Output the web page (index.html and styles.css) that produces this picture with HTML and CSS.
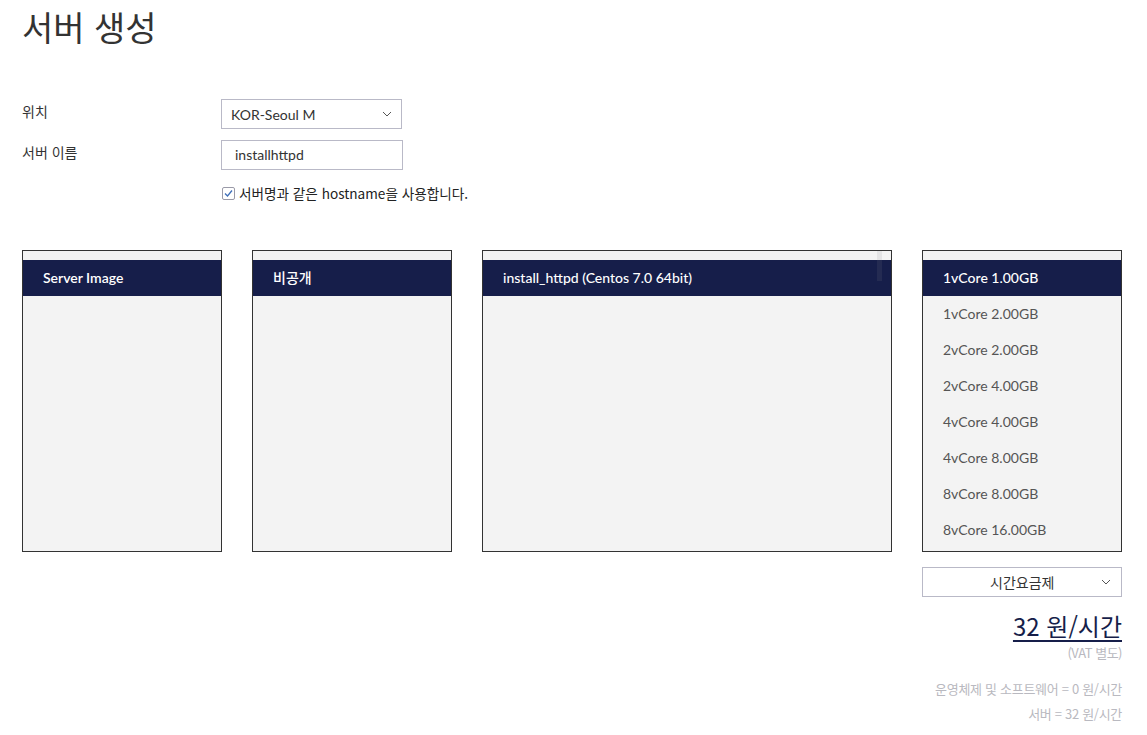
FILE: index.html
```html
<!DOCTYPE html>
<html lang="ko">
<head>
    <meta charset="UTF-8">
    <title>서버 생성</title>
    <link rel="stylesheet" href="styles.css">
</head>
<body>
    <div class="container">
        <h1>서버 생성</h1>

        <div class="form">
            <div class="form-row">
                <label>위치</label>
                <div class="select">
                    <span>KOR-Seoul M</span>
                    <svg class="chevron" width="10" height="6" viewBox="0 0 10 6"><polyline points="1,1 5,5 9,1" fill="none" stroke="#555" stroke-width="1"/></svg>
                </div>
            </div>
            <div class="form-row">
                <label>서버 이름</label>
                <div class="input">installhttpd</div>
            </div>
            <div class="form-row">
                <label></label>
                <div class="check">
                    <span class="box">
                        <svg width="11" height="11" viewBox="0 0 11 11"><polyline points="2,5.5 4.5,8 9,2.5" fill="none" stroke="#3f6fb8" stroke-width="1.3"/></svg>
                    </span>
                    서버명과 같은 hostname을 사용합니다.
                </div>
            </div>
        </div>

        <div class="lists">
            <ul class="list">
                <li class="selected strong">Server Image</li>
            </ul>
            <ul class="list">
                <li class="selected">비공개</li>
            </ul>
            <ul class="list wide">
                <li class="selected">install_httpd (Centos 7.0 64bit)</li>
                <span class="thumb"></span>
            </ul>
            <ul class="list">
                <li class="selected">1vCore 1.00GB</li>
                <li>1vCore 2.00GB</li>
                <li>2vCore 2.00GB</li>
                <li>2vCore 4.00GB</li>
                <li>4vCore 4.00GB</li>
                <li>4vCore 8.00GB</li>
                <li>8vCore 8.00GB</li>
                <li>8vCore 16.00GB</li>
            </ul>
        </div>

        <div class="pricing">
            <div class="select plan">
                <span>시간요금제</span>
                <svg class="chevron" width="10" height="6" viewBox="0 0 10 6"><polyline points="1,1 5,5 9,1" fill="none" stroke="#555" stroke-width="1"/></svg>
            </div>
            <div class="total">32 원/시간</div>
            <div class="vat">(VAT 별도)</div>
            <div class="detail">운영체제 및 소프트웨어 = 0 원/시간</div>
            <div class="detail">서버 = 32 원/시간</div>
        </div>
    </div>
</body>
</html>
```

FILE: styles.css
```css
* { margin: 0; padding: 0; box-sizing: border-box; }
body {
    font-family: Lato, "Noto Sans CJK KR", sans-serif;
    background: #fff;
    color: #333;
}
.container {
    width: 1147px;
    padding: 0 25px 0 22px;
}
h1 {
    font-family: "Noto Sans CJK KR", sans-serif;
    font-size: 34px;
    font-weight: 400;
    line-height: 40px;
    margin-top: 7px;
    color: #333;
}
.form {
    margin-top: 52px;
}
.form-row {
    display: flex;
    align-items: center;
    margin-bottom: 11px;
}
.form-row label {
    width: 199px;
    flex-shrink: 0;
    font-family: "Noto Sans CJK KR", sans-serif;
    font-size: 14px;
    color: #333;
    align-self: flex-start;
    padding-top: 2px;
}
.select {
    width: 181px;
    height: 30px;
    border: 1px solid #b9b9c7;
    display: flex;
    align-items: center;
    justify-content: space-between;
    padding: 0 9px 0 9px;
    font-size: 14px;
    color: #333;
    background: #fff;
}
.chevron {
    display: block;
}
.input {
    width: 182px;
    height: 30px;
    border: 1px solid #b9b9c7;
    padding: 0 13px;
    line-height: 28px;
    font-size: 14px;
    color: #333;
}
.check {
    display: flex;
    align-items: center;
    gap: 4px;
    font-family: "Noto Sans CJK KR", sans-serif;
    font-size: 13.6px;
    color: #222;
    margin-left: 1px;
    margin-top: 2px;
}
.box {
    width: 13px;
    height: 13px;
    border: 1px solid #9a9aa8;
    border-radius: 2px;
    display: flex;
    align-items: center;
    justify-content: center;
}
.lists {
    display: flex;
    gap: 30px;
    margin-top: 47px;
}
.list {
    list-style: none;
    width: 200px;
    height: 302px;
    border: 1px solid #333;
    background: #f3f3f3;
    padding-top: 9px;
    position: relative;
}
.list.wide {
    width: 410px;
}
.list li {
    height: 36px;
    line-height: 36px;
    padding-left: 20px;
    font-size: 14px;
    color: #555;
}
.list li.selected {
    background: #161e4a;
    color: #fff;
    font-weight: 500;
}
.list li.strong {
    font-weight: 600;
}
.thumb {
    position: absolute;
    top: 0;
    right: 9px;
    width: 5px;
    height: 30px;
    background: rgba(128, 128, 140, 0.13);
}
.pricing {
    width: 200px;
    margin-left: auto;
    margin-top: 15px;
    text-align: right;
    font-family: "Noto Sans CJK KR", sans-serif;
}
.select.plan {
    width: 200px;
    padding: 0 10px 0 67px;
    font-size: 14px;
    font-family: "Noto Sans CJK KR", sans-serif;
}
.total {
    margin-top: 13px;
    font-size: 24px;
    line-height: 32px;
    color: #161e4a;
    text-decoration: underline;
    text-decoration-thickness: 2px;
    text-underline-offset: 4px;
    white-space: nowrap;
}
.vat {
    font-size: 13px;
    color: #b9b9c0;
    margin-top: 1px;
    letter-spacing: -0.5px;
}
.detail {
    font-size: 13px;
    color: #b9b9c0;
    margin-top: 6px;
    white-space: nowrap;
    letter-spacing: -0.3px;
}
.vat + .detail {
    margin-top: 17px;
}
```
